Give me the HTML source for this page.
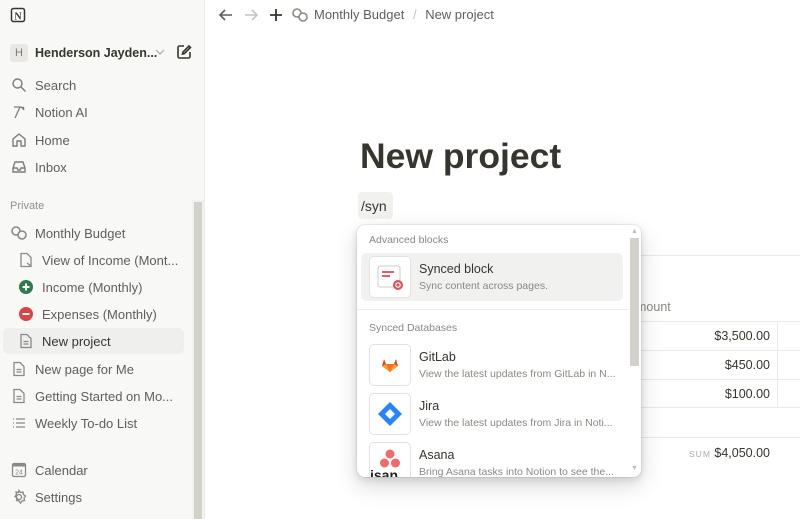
<!DOCTYPE html>
<html><head><meta charset="utf-8"><style>
*{box-sizing:border-box;margin:0;padding:0}
body{width:800px;height:519px;overflow:hidden;background:#fff;font-family:"Liberation Sans",sans-serif;position:relative;color:#37352f}
.sb{position:absolute;left:0;top:0;width:205px;height:519px;background:#f8f8f7;border-right:1px solid #ecebe9}
.it{position:absolute;left:0;height:26px;display:flex;align-items:center;font-size:13px;color:#5f5e5b;white-space:nowrap}
.ic{width:18px;height:18px;display:inline-flex;align-items:center;justify-content:center;margin-right:7px}
.abs{position:absolute}
.mi{position:absolute;left:4px;width:262px;height:48px;display:flex;align-items:center;border-radius:6px}
.box{width:42px;height:42px;border:1px solid #e3e2e0;border-radius:5px;background:#fff;margin:0 8px 0 8px;display:flex;align-items:center;justify-content:center;overflow:hidden}
.t1{font-size:12.5px;color:#37352f}
.t2{font-size:10.5px;color:#8a8984;margin-top:4px;white-space:nowrap}
.hl{position:absolute;height:1px;background:#e9e9e7}
.amt{position:absolute;right:30px;font-size:12.5px;color:#37352f;text-align:right}
</style></head><body>
<div class="sb">
 <svg class="abs" style="left:10px;top:7px" width="16" height="16" viewBox="0 0 16 16"><rect x="1.5" y="1.5" width="13" height="13" rx="2" fill="#fff" stroke="#37352f" stroke-width="1.5"/><text x="8" y="12.5" font-size="10" font-weight="bold" text-anchor="middle" font-family="Liberation Serif" fill="#37352f">N</text></svg>
 <div class="it" style="top:40px;left:10px;font-weight:bold;color:#37352f;font-size:12.5px"><span style="width:18px;height:18px;background:#e9e8e5;border-radius:3px;font-size:11px;color:#7d7c78;display:inline-flex;align-items:center;justify-content:center;margin-right:7px;font-weight:normal">H</span>Henderson Jayden...</div>
 <svg class="abs" style="left:155px;top:48px" width="10" height="8" viewBox="0 0 10 8" fill="none" stroke="#aaa" stroke-width="1.2"><path d="M1 2l4 4 4-4"/></svg>
 <svg class="abs" style="left:176px;top:44px" width="16" height="16" viewBox="0 0 16 16" fill="none" stroke="#37352f" stroke-width="1.6"><path d="M8 2H3.5A1.5 1.5 0 0 0 2 3.5v9A1.5 1.5 0 0 0 3.5 14h9a1.5 1.5 0 0 0 1.5-1.5V8"/><path d="M13 2L7 8l-.5 2 2-.5 6-6z"/></svg>
 <div class="it" style="top:72px;left:10px"><span class="ic"><svg width="16" height="16" viewBox="0 0 16 16" fill="none" stroke="#7d7c78" stroke-width="1.4"><circle cx="6.5" cy="6.5" r="4.5"/><path d="M10 10l4.5 4.5"/></svg></span>Search</div>
 <div class="it" style="top:99px;left:10px"><span class="ic"><svg width="16" height="16" viewBox="0 0 16 16" fill="none" stroke="#7d7c78" stroke-width="1.3"><path d="M3 3h6l-5 11M9 3q3 0 4 3M11 5l2-2"/></svg></span>Notion AI</div>
 <div class="it" style="top:127px;left:10px"><span class="ic"><svg width="16" height="16" viewBox="0 0 16 16" fill="none" stroke="#7d7c78" stroke-width="1.4"><path d="M2 14V7l6-5 6 5v7h-4V9H6v5z"/></svg></span>Home</div>
 <div class="it" style="top:154px;left:10px"><span class="ic"><svg width="16" height="16" viewBox="0 0 16 16" fill="none" stroke="#7d7c78" stroke-width="1.4"><path d="M2 9l2-6h8l2 6v4H2zM2 9h4l1 2h2l1-2h4"/></svg></span>Inbox</div>
 <div class="abs" style="left:10px;top:200px;font-size:11px;color:#91918e">Private</div>
 <div class="abs" style="left:192px;top:200px;width:12px;height:319px;background:#f1f1ef"></div>
 <div class="abs" style="left:194px;top:202px;width:8px;height:317px;background:#d3d1cb"></div>
 <div class="it" style="top:220px;left:10px"><span class="ic"><svg width="18" height="16" viewBox="0 0 18 16" fill="none" stroke="#8a8984" stroke-width="1.6"><circle cx="6" cy="6" r="4"/><circle cx="12" cy="10" r="4" fill="#f8f8f7"/></svg></span>Monthly Budget</div>
 <div class="it" style="top:247px;left:17px"><span class="ic"><svg width="16" height="16" viewBox="0 0 16 16" fill="none" stroke="#8a8984" stroke-width="1.3"><path d="M3 1.5h6l4 4v9H3z"/><path d="M9 11l4 3"/></svg></span>View of Income (Mont...</div>
 <div class="it" style="top:274px;left:17px"><span class="ic"><svg width="16" height="16"><circle cx="8" cy="8" r="7" fill="#2f7a4e"/><path d="M8 4.5v7M4.5 8h7" stroke="#fff" stroke-width="2"/></svg></span>Income (Monthly)</div>
 <div class="it" style="top:301px;left:17px"><span class="ic"><svg width="16" height="16"><circle cx="8" cy="8" r="7" fill="#d94444"/><path d="M4.5 8h7" stroke="#fff" stroke-width="2"/></svg></span>Expenses (Monthly)</div>
 <div class="abs" style="left:3px;top:328px;width:181px;height:26px;background:#efefed;border-radius:6px"></div>
 <div class="it" style="top:328px;left:17px;color:#37352f"><span class="ic"><svg width="16" height="16" viewBox="0 0 16 16" fill="none" stroke="#8a8984" stroke-width="1.3"><path d="M3 1.5h6l4 4v9H3z"/><path d="M5.5 8.5h5M5.5 11h5"/></svg></span>New project</div>
 <div class="it" style="top:356px;left:10px"><span class="ic"><svg width="16" height="16" viewBox="0 0 16 16" fill="none" stroke="#8a8984" stroke-width="1.3"><path d="M3 1.5h6l4 4v9H3z"/><path d="M5.5 8.5h5M5.5 11h5"/></svg></span>New page for Me</div>
 <div class="it" style="top:383px;left:10px"><span class="ic"><svg width="16" height="16" viewBox="0 0 16 16" fill="none" stroke="#8a8984" stroke-width="1.3"><path d="M3 1.5h6l4 4v9H3z"/><path d="M5.5 8.5h5M5.5 11h5"/></svg></span>Getting Started on Mo...</div>
 <div class="it" style="top:410px;left:10px"><span class="ic"><svg width="16" height="16" viewBox="0 0 16 16" fill="none" stroke="#8a8984" stroke-width="1.3"><path d="M2 4h1M2 8h1M2 12h1M5 4h9M5 8h9M5 12h9"/></svg></span>Weekly To-do List</div>
 <div class="it" style="top:457px;left:10px"><span class="ic"><svg width="16" height="16" viewBox="0 0 16 16"><rect x="1.5" y="1.5" width="13" height="13" rx="1.5" fill="none" stroke="#8a8984" stroke-width="1.3"/><rect x="1.5" y="1.5" width="13" height="3" fill="#8a8984"/><text x="8" y="12.5" font-size="7" text-anchor="middle" fill="#8a8984" font-family="Liberation Sans">24</text></svg></span>Calendar</div>
 <div class="it" style="top:484px;left:10px"><span class="ic"><svg width="16" height="16" viewBox="0 0 16 16" fill="none" stroke="#8a8984" stroke-width="1.3"><circle cx="8" cy="8" r="2.5"/><path d="M8 1.5l1.5 2 2.5-.5.5 2.5 2 1.5-1.5 2 .5 2.5-2.5.5-1.5 2-1.5-2-2.5-.5.5-2.5-2-1.5 1.5-2-.5-2.5 2.5.5z"/></svg></span>Settings</div>
</div>
<!-- topbar -->
<svg class="abs" style="left:217px;top:6px" width="18" height="18" viewBox="0 0 18 18" fill="none" stroke="#5f5e5b" stroke-width="1.6"><path d="M15 9H3M8 4L3 9l5 5"/></svg>
<svg class="abs" style="left:242px;top:6px" width="18" height="18" viewBox="0 0 18 18" fill="none" stroke="#c4c3c0" stroke-width="1.6"><path d="M3 9h12M10 4l5 5-5 5"/></svg>
<svg class="abs" style="left:267px;top:6px" width="18" height="18" viewBox="0 0 18 18" fill="none" stroke="#37352f" stroke-width="1.8"><path d="M9 3v12M3 9h12"/></svg>
<svg class="abs" style="left:291px;top:7px" width="18" height="16" viewBox="0 0 18 16" fill="none" stroke="#8a8984" stroke-width="1.6"><circle cx="6" cy="6" r="4"/><circle cx="12" cy="10" r="4" fill="#fff"/></svg>
<div class="abs" style="left:314px;top:7px;font-size:13px;color:#5f5e5b">Monthly Budget <span style="color:#c4c3c0;margin:0 5px">/</span> New project</div>
<!-- title -->
<div class="abs" style="left:360px;top:136px;font-size:35.5px;font-weight:bold;color:#37352f">New project</div>
<div class="abs" style="left:358px;top:192px;width:35px;height:27px;background:#f1f1ef;border-radius:4px;font-size:14px;color:#37352f;padding:6px 0 0 3px">/syn</div>
<!-- table behind -->
<div class="hl" style="left:640px;top:255px;width:160px"></div>
<div class="abs" style="left:636px;top:300px;font-size:12.5px;color:#8a8984">mount</div>
<div class="hl" style="left:640px;top:321px;width:160px"></div>
<div class="hl" style="left:640px;top:350px;width:160px"></div>
<div class="hl" style="left:640px;top:379px;width:160px"></div>
<div class="hl" style="left:640px;top:407px;width:160px"></div>
<div class="hl" style="left:640px;top:437px;width:160px"></div>
<div class="abs" style="left:777px;top:321px;width:1px;height:87px;background:#e9e9e7"></div>
<div class="amt" style="top:329px">$3,500.00</div>
<div class="amt" style="top:358px">$450.00</div>
<div class="amt" style="top:387px">$100.00</div>
<div class="amt" style="top:446px"><span style="font-size:8.5px;color:#aaa;letter-spacing:1px">SUM</span> $4,050.00</div>
<!-- popup -->
<div class="abs" style="left:357px;top:225px;width:284px;height:252px;background:#fff;border-radius:8px;box-shadow:0 0 0 1px rgba(15,15,15,.06),0 3px 8px rgba(15,15,15,.12),0 9px 24px rgba(15,15,15,.15);overflow:hidden">
 <div class="abs" style="left:12px;top:9px;font-size:10.5px;color:#8a8984">Advanced blocks</div>
 <div class="mi" style="top:28px;background:#f1f1ef">
  <div class="box"><svg width="30" height="30" viewBox="0 0 30 30"><rect x="3" y="4" width="22" height="21" rx="2" fill="#fff" stroke="#ccc"/><path d="M7 10h12M7 14h8" stroke="#e06060" stroke-width="2"/><circle cx="23" cy="23" r="5" fill="#e05252"/><circle cx="23" cy="23" r="2.2" fill="none" stroke="#fff" stroke-width="1.2"/></svg></div>
  <div><div class="t1">Synced block</div><div class="t2">Sync content across pages.</div></div>
 </div>
 <div class="hl" style="left:0;top:84px;width:272px;background:#ededeb"></div>
 <div class="abs" style="left:12px;top:97px;font-size:10.5px;color:#8a8984">Synced Databases</div>
 <div class="mi" style="top:116px">
  <div class="box"><svg width="18" height="16" viewBox="0 0 18 16"><path d="M9 15L1 9l2-7 2 5h8l2-5 2 7z" fill="#e24329"/><path d="M9 15L5 7h8z" fill="#fc6d26"/><path d="M1 9l4-2 4 8z M17 9l-4-2-4 8z" fill="#fca326"/></svg></div>
  <div><div class="t1">GitLab</div><div class="t2">View the latest updates from GitLab in N...</div></div>
 </div>
 <div class="mi" style="top:165px">
  <div class="box"><svg width="26" height="26" viewBox="0 0 26 26"><path d="M13 1l12 12-12 12L1 13z" fill="#2684ff"/><path d="M13 8l5 5-5 5-5-5z" fill="#fff"/></svg></div>
  <div><div class="t1">Jira</div><div class="t2">View the latest updates from Jira in Noti...</div></div>
 </div>
 <div class="mi" style="top:214px">
  <div class="box" style="align-items:flex-start;padding-top:4px;flex-direction:column"><svg width="40" height="22" viewBox="0 0 40 22"><circle cx="20" cy="6" r="4.5" fill="#f06a6a"/><circle cx="14.5" cy="15" r="4.5" fill="#f06a6a"/><circle cx="25.5" cy="15" r="4.5" fill="#f06a6a"/></svg><div style="font-size:14px;font-weight:bold;margin-top:-2px;line-height:14px;color:#222">isan</div></div>
  <div><div class="t1">Asana</div><div class="t2">Bring Asana tasks into Notion to see the...</div></div>
 </div>
 <div class="abs" style="left:272px;top:0;width:12px;height:252px;background:#fff"></div>
 <div class="abs" style="left:273px;top:13px;width:9px;height:128px;background:#d3d1cb"></div>
 <div class="abs" style="left:274px;top:3px;font-size:7px;color:#bbb">▲</div>
 <div class="abs" style="left:274px;top:240px;font-size:7px;color:#bbb">▼</div>
</div>
</body></html>
